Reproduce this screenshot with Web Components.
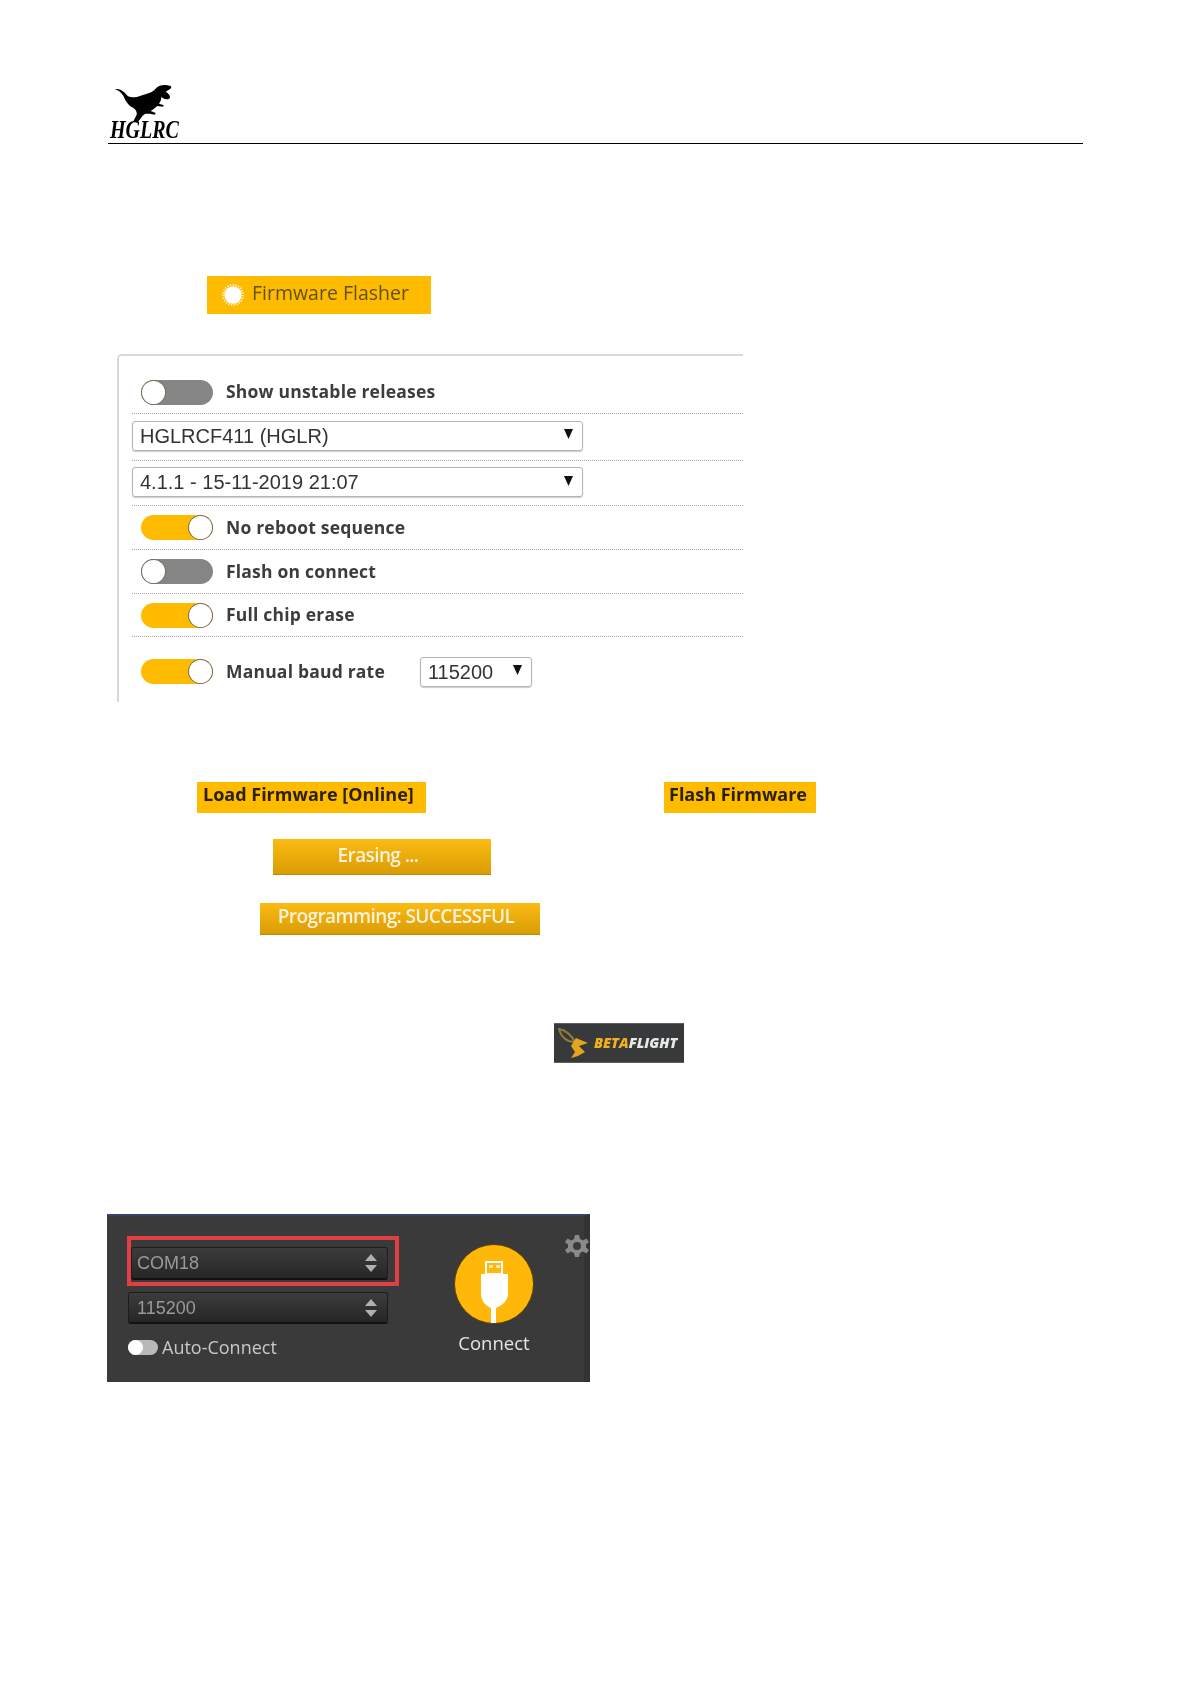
<!DOCTYPE html>
<html>
<head>
<meta charset="utf-8">
<title>Firmware flashing</title>
<style>
  html, body { margin: 0; background: #fff; }
</style>
</head>
<body>
<manual-page>
  <doc-header></doc-header>
  <fw-tag class="flasher" icon>Firmware Flasher</fw-tag>
  <flash-panel>
    <fw-row style="height:43px"><fw-toggle></fw-toggle><span>Show unstable releases</span></fw-row>
    <fw-row style="height:47px;padding-bottom:3px"><fw-select wide>HGLRCF411 (HGLR)</fw-select></fw-row>
    <fw-row style="height:45px;padding-bottom:2px"><fw-select wide>4.1.1 - 15-11-2019 21:07</fw-select></fw-row>
    <fw-row><fw-toggle on></fw-toggle><span>No reboot sequence</span></fw-row>
    <fw-row><fw-toggle></fw-toggle><span>Flash on connect</span></fw-row>
    <fw-row style="height:43px"><fw-toggle on></fw-toggle><span>Full chip erase</span></fw-row>
    <fw-row last><fw-toggle on></fw-toggle><span>Manual baud rate</span><fw-select>115200</fw-select></fw-row>
  </flash-panel>
  <button-line>
    <fw-tag strong>Load Firmware [Online]</fw-tag>
    <fw-tag strong style="padding-left:5px">Flash Firmware</fw-tag>
  </button-line>
  <status-bar style="margin:26px 0 0 165px;width:218px;height:36px;padding-bottom:2px">Erasing ...</status-bar>
  <status-bar style="margin:28px 0 0 152px;width:280px;height:32px">Programming: SUCCESSFUL</status-bar>
  <bf-logo></bf-logo>
  <connect-panel></connect-panel>
</manual-page>

<script>
// page wrapper, everything flows from the top of the sheet
class ManualPage extends HTMLElement {
    constructor() {
        super();
        this.attachShadow({ mode: 'open' });
        this.shadowRoot.innerHTML = `
      <style>
        :host {
          display: block;
          box-sizing: border-box;
          width: 1191px;
          height: 1684px;
          padding: 84px 108px 0;
          overflow: hidden;
          font-family: "Open Sans", sans-serif;
        }
      </style>
      <slot></slot>
    `;
    }
}

class DocHeader extends HTMLElement {
    constructor() {
        super();
        this.attachShadow({ mode: 'open' });
        this.shadowRoot.innerHTML = `
      <style>
        :host {
          display: block;
          width: 975px;
          height: 59px;
          border-bottom: 1px solid #000;
        }
        .logo { display: flex; flex-direction: column; width: 76px; filter: blur(.3px); }
        svg { display: block; width: 76px; height: 38px; }
        span {
          font: italic 700 20px/20px "Liberation Serif", serif;
          margin-left: 2px;
          color: #000;
          transform: scaleY(1.25);
          transform-origin: left bottom;
        }
      </style>
      <div class="logo">
        <svg viewBox="24 27 228 114">
          <path fill="#000" d="M44 42C60 40 72 48 84 64C98 70 112 66 128 60C146 55 158 52 166 42C175 31 192 27 212 33C216 37 213 42 204 46L197 50C206 56 211 62 210 68C206 75 196 74 188 69L184 66C184 74 181 81 177 86L192 91L188 95L172 93C164 100 158 105 152 108L167 114L164 119L150 116L136 116L128 122L112 143L98 143L110 119C112 110 106 103 97 97C84 90 76 76 70 62C62 51 54 45 44 42Z"/>
        </svg>
        <span>HGLRC</span>
      </div>
    `;
    }
}

// flat yellow highlight around a word from the flasher tab
class FwTag extends HTMLElement {
    constructor() {
        super();
        this.attachShadow({ mode: 'open' });
        const icon = this.hasAttribute('icon')
            ? `<svg viewBox="0 0 24 24"><circle cx="12" cy="12" r="9.500" fill="#fff"/><circle cx="12" cy="12" r="11" fill="none" stroke="#fff" stroke-width="2" stroke-dasharray="1.500 1.500" opacity=".8"/></svg>`
            : '';
        this.shadowRoot.innerHTML = `
      <style>
        :host {
          display: flex;
          box-sizing: border-box;
          align-items: center;
          background: #ffbb00;
          color: #5f5216;
          font: 400 19.5px/1 "Open Sans", sans-serif;
          white-space: nowrap;
        }
        :host(.flasher) {
          width: 224px;
          height: 38px;
          margin: 132px 0 0 99px;
          padding: 0 0 4px 15px;
          gap: 8px;
        }
        :host([strong]) {
          height: 31px;
          padding: 0 0 7px 6px;
          color: #2b2000;
          font-weight: 700;
          font-size: 18px;
        }
        svg { width: 22px; height: 22px; margin-top: 3px; filter: blur(.6px); }
        span { filter: blur(.4px); }
      </style>
      ${icon}<span><slot></slot></span>
    `;
    }
}

class FlashPanel extends HTMLElement {
    constructor() {
        super();
        this.attachShadow({ mode: 'open' });
        this.shadowRoot.innerHTML = `
      <style>
        :host {
          display: block;
          box-sizing: border-box;
          width: 626px;
          height: 348px;
          margin: 40px 0 0 9px;
          padding: 15px 0 0 13px;
          border: solid #d8d8d8;
          border-width: 2px 0 0 2px;
          border-top-left-radius: 5px;
        }
      </style>
      <slot></slot>
    `;
    }
}

class FwRow extends HTMLElement {
    constructor() {
        super();
        this.attachShadow({ mode: 'open' });
        this.shadowRoot.innerHTML = `
      <style>
        :host {
          display: flex;
          align-items: center;
          box-sizing: border-box;
          height: 44px;
          border-bottom: 1px dotted #a8a8a8;
          color: #3c3c3c;
          font: 700 17.5px/1 "Open Sans", sans-serif;
          letter-spacing: .2px;
          gap: 13px;
        }
        :host([last]) { border-bottom: 0; height: 69px; }
        ::slotted(span) { filter: blur(.35px); }
      </style>
      <slot></slot>
    `;
    }
}

class FwToggle extends HTMLElement {
    constructor() {
        super();
        this.attachShadow({ mode: 'open' });
        this.shadowRoot.innerHTML = `
      <style>
        :host {
          display: flex;
          box-sizing: border-box;
          flex: none;
          width: 72px;
          height: 25px;
          margin-left: 9px;
          border-radius: 13px;
          background: #858585;
          padding: 1px;
          filter: blur(.3px);
        }
        :host([on]) { background: #ffbb00; justify-content: flex-end; }
        i {
          display: block;
          width: 23px;
          height: 23px;
          border-radius: 50%;
          background: #fff;
          box-shadow: 0 0 0 1px #77705a;
        }
      </style>
      <i></i>
    `;
    }
}

class FwSelect extends HTMLElement {
    constructor() {
        super();
        this.attachShadow({ mode: 'open' });
        this.shadowRoot.innerHTML = `
      <style>
        :host {
          display: flex;
          align-items: center;
          justify-content: space-between;
          box-sizing: border-box;
          width: 112px;
          height: 30px;
          margin-left: 22px;
          padding: 0 9px 0 7px;
          border: 1px solid #b4b4b4;
          border-radius: 3px;
          box-shadow: 0 1px 1px #ccc;
          color: #333;
          letter-spacing: 0;
          font: 400 20px/1 "Liberation Sans", sans-serif;
        }
        :host([wide]) { width: 451px; margin-left: 0; }
        span { filter: blur(.35px); }
        svg { width: 9px; height: 10px; margin-bottom: 3px; }
      </style>
      <span><slot></slot></span>
      <svg viewBox="0 0 9 10"><path fill="#111" d="M0 0H9L4.5 10Z"/></svg>
    `;
    }
}

class ButtonLine extends HTMLElement {
    constructor() {
        super();
        this.attachShadow({ mode: 'open' });
        this.shadowRoot.innerHTML = `
      <style>
        :host {
          display: grid;
          grid-template-columns: 229px 152px;
          column-gap: 238px;
          margin: 80px 0 0 89px;
        }
      </style>
      <slot></slot>
    `;
    }
}

class StatusBar extends HTMLElement {
    constructor() {
        super();
        this.attachShadow({ mode: 'open' });
        this.shadowRoot.innerHTML = `
      <style>
        :host {
          display: flex;
          align-items: center;
          justify-content: center;
          box-sizing: border-box;
          padding: 0 8px 4px 0;
          background: linear-gradient(#fcbb12, #d99c05);
          border-bottom: 1px solid #c08a04;
          color: #faf2dc;
          font: 600 19px/1 "Open Sans", sans-serif;
          letter-spacing: -.6px;
          white-space: nowrap;
        }
        span { filter: blur(.5px); }
      </style>
      <span><slot></slot></span>
    `;
    }
}

class BfLogo extends HTMLElement {
    constructor() {
        super();
        this.attachShadow({ mode: 'open' });
        this.shadowRoot.innerHTML = `
      <style>
        :host {
          display: flex;
          align-items: center;
          box-sizing: border-box;
          width: 130px;
          height: 40px;
          margin: 88px 0 0 446px;
          padding: 0 0 0 4px;
          background: #37393a;
          border: solid #5b5d5e;
          border-width: 1px 0;
        }
        svg { flex: none; width: 32px; height: 30px; filter: blur(.5px); }
        b {
          margin: 0 0 0 4px;
          color: #f2b01e;
          font: italic 800 14.3px/1 "Open Sans", sans-serif;
          filter: blur(.4px);
        }
        b em { color: #e8e8e8; font-style: inherit; }
      </style>
      <svg viewBox="0 0 32 30">
        <path fill="none" stroke="#8e7a3a" stroke-width="2" d="M1 1C8 2 14 8 17 14C10 15 3 9 1 1Z"/>
        <path fill="#e2a61e" d="M18 10L30 15L21 18L27 24L20 28L13 30L17 24L13 18Z"/>
      </svg>
      <b>BETA<em>FLIGHT</em></b>
    `;
    }
}

class ConnectPanel extends HTMLElement {
    constructor() {
        super();
        this.attachShadow({ mode: 'open' });
        this.shadowRoot.innerHTML = `
      <style>
        :host {
          display: grid;
          grid-template-columns: 319px 96px 1fr;
          box-sizing: border-box;
          width: 483px;
          height: 168px;
          margin: 151px 0 0 -1px;
          padding: 20px 7px 0 20px;
          background: #3a3a3a;
          border-top: 2px solid #33456e;
          border-right: 6px solid #333;
          color: #d0d0d0;
        }
        .ports { display: flex; flex-direction: column; gap: 12px; }
        .hl {
          box-sizing: border-box;
          width: 272px;
          height: 50px;
          padding: 7px 0 0;
          border: 4px solid #e23f45;
          margin-bottom: -6px;
        }
        .sel {
          display: flex;
          align-items: center;
          justify-content: space-between;
          box-sizing: border-box;
          width: 260px;
          height: 32px;
          margin-left: 1px;
          padding: 0 9px 0 8px;
          border-radius: 3px;
          background: linear-gradient(#3c3c3c, #262626);
          border: 1px solid #1d1d1d;
          border-bottom: 2px solid #111;
          color: #9a9a9a;
          font: 400 18px/1 "Liberation Sans", sans-serif;
        }
        .hl .sel { width: 257px; height: 33px; margin: 0; padding-left: 5px; }
        .sel svg { width: 14px; height: 20px; }
        .auto {
          display: flex;
          align-items: center;
          gap: 4px;
          margin: 2px 0 0 1px;
          color: #c8c8c8;
          font: 400 18px/1 "Open Sans", sans-serif;
        }
        .auto i {
          position: relative;
          display: block;
          width: 30px;
          height: 15px;
          border-radius: 8px;
          background: #b9b9b9;
        }
        .auto i::before {
          content: "";
          position: absolute;
          left: 0;
          top: 0;
          width: 15px;
          height: 15px;
          border-radius: 50%;
          background: #fff;
        }
        .conn { display: flex; flex-direction: column; align-items: center; margin-top: 8px; }
        .conn svg { display: block; width: 80px; height: 80px; }
        .conn span { margin-top: 10px; font: 400 18.5px/1 "Open Sans", sans-serif; color: #e4e4e4; }
        .gear { justify-self: end; width: 24px; height: 24px; margin: -2px -12px 0 0; }
        .gear svg { display: block; width: 24px; height: 24px; filter: blur(.4px); }
        span, .sel { filter: blur(.35px); }
      </style>
      <div class="ports">
        <div class="hl"><div class="sel">COM18 ${this.arrows()}</div></div>
        <div class="sel">115200 ${this.arrows()}</div>
        <div class="auto"><i></i><span>Auto-Connect</span></div>
      </div>
      <div class="conn">
        <svg viewBox="0 0 80 80">
          <circle cx="40" cy="40" r="39.5" fill="#ffb70a" stroke="#5c4306" stroke-width="1"/>
          <path fill="none" stroke="#fff" stroke-width="2" d="M32 18H48V30H32Z"/>
          <path fill="#fff" d="M35 21H39V24H35ZM42 21H46V24H42Z" opacity=".7"/>
          <path fill="#fff" d="M27 30H54V50C54 57 47 62 42 64V79H37V64C32 62 27 57 27 50Z"/>
        </svg>
        <span>Connect</span>
      </div>
      <div class="gear">
        <svg viewBox="0 0 24 24"><path fill="#8a8a8a" fill-rule="evenodd" d="M10 1H14L15 5L18 6.500L21.500 4.500L24 8L21 10.500V13.500L24 16L21.500 19.500L18 17.500L15 19L14 23H10L9 19L6 17.500L2.500 19.500L0 16L3 13.500V10.500L0 8L2.500 4.500L6 6.500L9 5ZM12 8A4 4 0 1 0 12 16A4 4 0 1 0 12 8Z"/></svg>
      </div>
    `;
    }

    arrows() {
        return `<svg viewBox="0 0 14 20"><path fill="#b0b0b0" d="M7 1L13 8H1ZM7 19L1 12H13Z"/></svg>`;
    }
}

customElements.define('manual-page', ManualPage);
customElements.define('doc-header', DocHeader);
customElements.define('fw-tag', FwTag);
customElements.define('flash-panel', FlashPanel);
customElements.define('fw-row', FwRow);
customElements.define('fw-toggle', FwToggle);
customElements.define('fw-select', FwSelect);
customElements.define('button-line', ButtonLine);
customElements.define('status-bar', StatusBar);
customElements.define('bf-logo', BfLogo);
customElements.define('connect-panel', ConnectPanel);
</script>
</body>
</html>
